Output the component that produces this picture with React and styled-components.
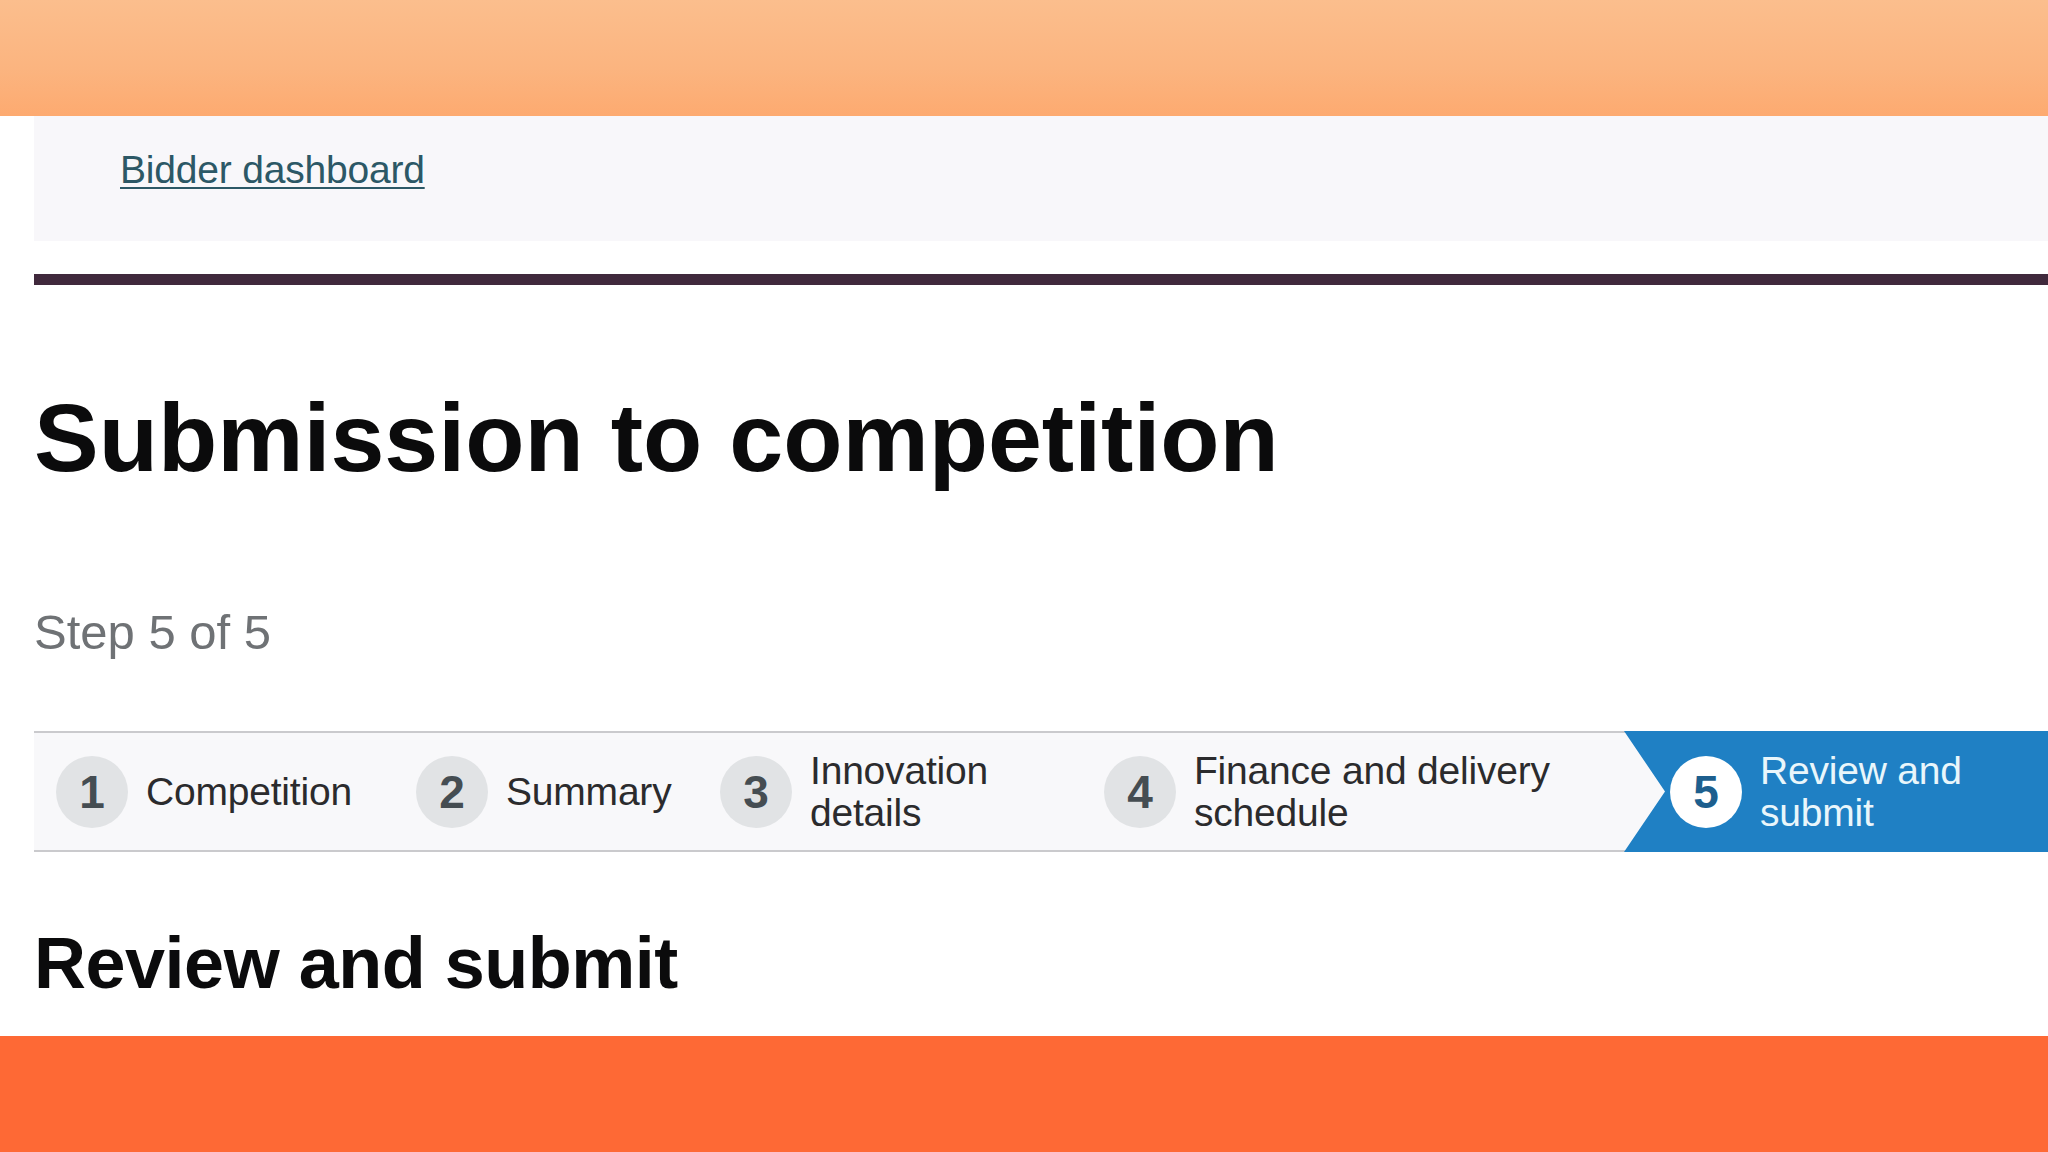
import React from 'react'
import styled, { createGlobalStyle } from 'styled-components'

const GlobalStyle = createGlobalStyle`
  html, body {
    margin: 0;
    padding: 0;
    background: #ffffff;
  }
  body {
    font-family: 'Liberation Sans', Arial, sans-serif;
    color: #0b0c0c;
  }
`

const Page = styled.div`
  width: 2048px;
  height: 1152px;
  overflow: hidden;
  display: flex;
  flex-direction: column;
  background: #ffffff;
`

const TopBand = styled.div`
  height: 116px;
  flex-shrink: 0;
  background: linear-gradient(180deg, #fbbe8d 0%, #fbb47f 60%, #fdaa70 100%);
`

const Content = styled.main`
  flex: 1;
  padding-left: 34px;
  display: flex;
  flex-direction: column;
`

const NavBar = styled.nav`
  height: 125px;
  background: #f8f7fa;
  padding-left: 86px;
  padding-top: 32px;
  box-sizing: border-box;
`

const NavLink = styled.a`
  font-size: 39px;
  color: #2c5866;
  text-decoration: underline;
  text-decoration-thickness: 2px;
  text-underline-offset: 4px;
  letter-spacing: -0.2px;
`

const Rule = styled.hr`
  margin: 33px 0 0;
  border: none;
  height: 11px;
  background: #40293c;
`

const Title = styled.h1`
  margin: 104px 0 0;
  font-size: 97px;
  line-height: 1;
  font-weight: 700;
  letter-spacing: 0;
  color: #0b0b0c;
`

const StepCount = styled.p`
  margin: 122px 0 0;
  font-size: 49px;
  line-height: 1;
  color: #6f7275;
`

const Stepper = styled.ol`
  list-style: none;
  margin: 74px 0 0;
  padding: 0 0 0 22px;
  height: 117px;
  display: grid;
  grid-template-columns: 360px 304px 384px 520px 1fr;
  background: #f8f8fa;
  border-top: 2px solid #cacacd;
  border-bottom: 2px solid #cacacd;
`

const Step = styled.li`
  display: flex;
  align-items: center;
  gap: 18px;
  ${({ $active }) =>
    $active &&
    `
    margin: -2px 0;
    padding-left: 46px;
    background: #1f80c4;
    clip-path: polygon(0 0, 100% 0, 100% 100%, 0 100%, 41px 50%);
  `}
`

const StepNumber = styled.span`
  flex-shrink: 0;
  width: 72px;
  height: 72px;
  border-radius: 50%;
  display: flex;
  align-items: center;
  justify-content: center;
  font-size: 46px;
  font-weight: 700;
  background: ${({ $active }) => ($active ? '#ffffff' : '#e1e3e5')};
  color: ${({ $active }) => ($active ? '#1d5f8e' : '#454d52')};
`

const StepLabel = styled.span`
  font-size: 39px;
  line-height: 42px;
  letter-spacing: -0.2px;
  color: ${({ $active }) => ($active ? '#e9f6fb' : '#2b2b2d')};
  max-width: ${({ $wrap }) => $wrap}px;
`

const Subtitle = styled.h2`
  margin: 75px 0 0;
  font-size: 72px;
  line-height: 1;
  font-weight: 700;
  letter-spacing: -0.5px;
  color: #0b0b0c;
`

const BottomBand = styled.div`
  height: 116px;
  flex-shrink: 0;
  background: #fe6935;
`

const steps = [
  { n: 1, label: 'Competition', wrap: 260 },
  { n: 2, label: 'Summary', wrap: 220 },
  { n: 3, label: 'Innovation details', wrap: 200 },
  { n: 4, label: 'Finance and delivery schedule', wrap: 380 },
  { n: 5, label: 'Review and submit', wrap: 210, active: true },
]

export default function App() {
  return (
    <>
      <GlobalStyle />
      <Page>
        <TopBand />
        <Content>
          <NavBar>
            <NavLink href="#">Bidder dashboard</NavLink>
          </NavBar>
          <Rule />
          <Title>Submission to competition</Title>
          <StepCount>Step 5 of 5</StepCount>
          <Stepper>
            {steps.map((s) => (
              <Step key={s.n} $active={s.active}>
                <StepNumber $active={s.active}>{s.n}</StepNumber>
                <StepLabel $active={s.active} $wrap={s.wrap}>
                  {s.label}
                </StepLabel>
              </Step>
            ))}
          </Stepper>
          <Subtitle>Review and submit</Subtitle>
        </Content>
        <BottomBand />
      </Page>
    </>
  )
}
